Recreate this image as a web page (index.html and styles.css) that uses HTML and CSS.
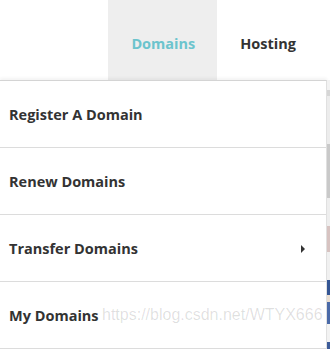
FILE: index.html
```html
<!DOCTYPE html>
<html lang="en">
<head>
    <meta charset="UTF-8" />
    <title>Domains Menu</title>
    <link rel="stylesheet" href="styles.css">
</head>
<body>

<header class="topbar">
    <nav class="tabs">
        <a class="tab active" href="#">Domains</a>
        <a class="tab" href="#">Hosting</a>
    </nav>
</header>

<div class="dropdown-wrap">
    <ul class="dropdown">
        <li class="item">Register A Domain</li>
        <li class="item">Renew Domains</li>
        <li class="item has-sub">Transfer Domains <span class="caret"></span></li>
        <li class="item">My Domains</li>
    </ul>
    <div class="behind"></div>
    <div class="watermark">https://blog.csdn.net/WTYX666</div>
</div>

</body>
</html>
```

FILE: styles.css
```css
body {
    margin: 0;
    font-family: "Open Sans", Arial, sans-serif;
    background: #fff;
}
.topbar {
    height: 80px;
    display: flex;
    justify-content: flex-end;
}
.tabs {
    display: flex;
    padding-right: 14px;
}
.tab {
    display: flex;
    align-items: center;
    padding: 6px 22px 0 23px;
    font-size: 14.5px;
    font-weight: 700;
    color: #333;
    text-decoration: none;
}
.tab.active {
    background: #eeeeee;
    color: #6cc4cd;
}
.tab + .tab {
    padding-right: 20px;
}
.dropdown-wrap {
    position: relative;
    display: flex;
}
.dropdown {
    list-style: none;
    margin: 0;
    padding: 0;
    width: 326px;
    border-top: 1px solid #d4d4d4;
    border-right: 1px solid #e0e0e0;
    box-shadow: 0 -2px 3px rgba(0, 0, 0, 0.05);
    background: #fff;
}
.item {
    height: 66px;
    display: flex;
    align-items: center;
    padding-left: 9px;
    border-bottom: 1px solid #dcdcdc;
    font-size: 14.5px;
    font-weight: 700;
    color: #333;
    position: relative;
}
.caret {
    position: absolute;
    right: 21px;
    top: 30px;
    width: 0;
    height: 0;
    border-top: 4px solid transparent;
    border-bottom: 4px solid transparent;
    border-left: 4px solid #333;
}
.behind {
    flex: 1;
    background: linear-gradient(to bottom,
        #f2f2f2 0, #f2f2f2 10px, #d6d6d6 10px, #d6d6d6 16px, #ececec 16px,
        #ececec 64px, #c9c9c9 64px, #c9c9c9 118px, #eeeeee 118px, #eeeeee 146px,
        #d7c3c1 146px, #d7c3c1 172px, #f0f0f0 172px, #f0f0f0 200px,
        #345593 200px, #345593 215px, #e9ddd0 215px, #e9ddd0 222px,
        #4a6aa8 222px, #4a6aa8 244px, #f2f2f2 244px, #f2f2f2 262px, #3d5c99 262px);
}
.watermark {
    position: absolute;
    left: 102px;
    top: 226px;
    font-family: "Liberation Sans", Arial, sans-serif;
    font-size: 16px;
    color: rgba(0, 0, 0, 0.13);
}
```
